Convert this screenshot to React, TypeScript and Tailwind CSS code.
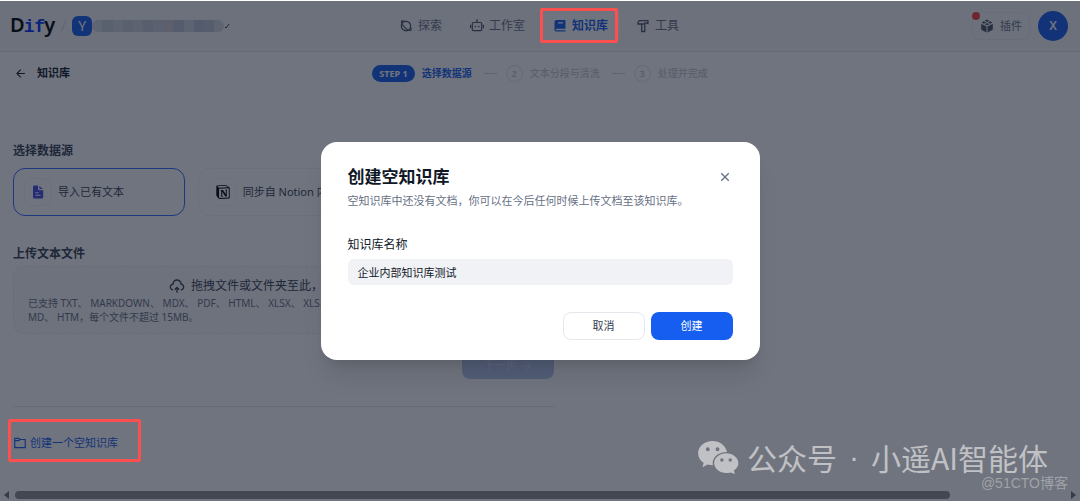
import {
  RiArrowLeftLine,
  RiArrowRightLine,
  RiCloseLine,
  RiFolder6Line,
  RiGlobalLine,
  RiPlanetLine,
  RiRobot2Line,
  RiUploadCloud2Line,
} from "react-icons/ri";
import { SiNotion } from "react-icons/si";

type IconProps = { className?: string };

function BookIcon({ className }: IconProps) {
  return (
    <svg viewBox="0 0 14 14" className={className} fill="currentColor">
      <path
        fillRule="evenodd"
        d="M3.500 1H12a.5.5 0 01.5.5v8.300H3.200a.8.8 0 000 1.400h9.300v1.300H3.300a1.800 1.800 0 01-1.800-1.800V3a2 2 0 012-2zM5 3.300v1.200h5V3.300z"
      />
    </svg>
  );
}

function HammerIcon({ className }: IconProps) {
  return (
    <svg viewBox="0 0 14 14" className={className} fill="none" stroke="currentColor" strokeWidth="1.300" strokeLinejoin="round">
      <path d="M3.500 1.700H12v3L10 3.900H8.800v8.600H5.700V5H1.800c0-1.800.6-2.800 1.700-3.300z" />
      <path d="M5.700 5h3.100" />
    </svg>
  );
}

function FileIcon({ className }: IconProps) {
  return (
    <svg viewBox="0 0 14 14" className={className} fill="currentColor">
      <path
        fillRule="evenodd"
        d="M3.500.5H7v3.300c0 .9.6 1.500 1.500 1.500h3.700V12c0 .9-.7 1.500-1.500 1.500H3.500C2.600 13.500 2 12.900 2 12V2C2 1.100 2.600.5 3.500.5zM4.400 7.200v1h3.200v-1zm0 2.500v1h5.200v-1z"
      />
      <path d="M8.300.9L11.800 4H9.100c-.5 0-.8-.3-.8-.8z" />
    </svg>
  );
}

function PluginIcon({ className }: IconProps) {
  return (
    <svg viewBox="0 0 14 14" className={className} fill="currentColor">
      <path d="M1.200 4.700l5.300 2.700v6L1.800 11a1 1 0 01-.6-.9zM12.800 4.700L7.500 7.400v6l4.700-2.400a1 1 0 00.6-.9z" />
      <path d="M3.900 2.200L6.100 3.400 3.900 4.700 1.700 3.500zM10.100 2.200l2.200 1.300-2.200 1.200-2.200-1.300zM7 .6l2.200 1.100L7 2.900 4.800 1.700zM7 4l2.200 1.200L7 6.300 4.800 5.200z" />
    </svg>
  );
}

const navItems = [
  { name: "探索", icon: RiPlanetLine },
  { name: "工作室", icon: RiRobot2Line },
  { name: "知识库", icon: BookIcon, active: true },
  { name: "工具", icon: HammerIcon },
];

const steps = ["文本分段与清洗", "处理并完成"];

const sources = [
  { name: "导入已有文本", icon: FileIcon, color: "text-[#444ce7]", active: true },
  { name: "同步自 Notion 内容", icon: SiNotion, color: "text-black" },
  { name: "同步自 Web 站点", icon: RiGlobalLine, color: "text-[#155eef]" },
];

const workspaceTiles = [
  "bg-[#d5dae4]", "bg-[#c6cdd8]", "bg-[#d3d6df]", "bg-[#c9ced9]", "bg-[#d0d5de]",
  "bg-[#c3c9d8]", "bg-[#ccd0da]", "bg-[#d3cad4]", "bg-[#b9c3d4]", "bg-[#d0d5de]",
  "bg-[#b7c1d1]", "bg-[#bfc7d4]", "bg-[#d3d8e0]",
];

function Logo() {
  return (
    <a href="#home" className="flex items-baseline text-xl leading-6 font-semibold text-black">
      D
      <span className="-mx-px font-['Liberation_Mono',monospace] text-lg leading-6 font-bold text-[#0033ff]">
        if
      </span>
      y
    </a>
  );
}

function Header() {
  return (
    <header className="flex h-[52px] items-center border-t border-b border-t-white border-b-[#e4e7ec] bg-[#f6f7f9] pr-3 pl-[10px]">
      <div className="flex flex-1 items-center">
        <Logo />
        <span className="mx-2 h-3 w-px rotate-[25deg] bg-[#d0d5dd]" />
        <div className="flex size-5 items-center justify-center rounded-md bg-[#155eef] text-sm text-white">
          Y
        </div>
        <div className="flex h-3 w-[132px] overflow-hidden rounded-md">
          {workspaceTiles.map((tile, i) => (
            <span key={i} className={`flex-1 ${tile}`} />
          ))}
        </div>
        <svg viewBox="0 0 6 6" className="size-[6px] text-[#344054]">
          <path d="M1 4l1 1 3-4" fill="none" stroke="currentColor" />
        </svg>
      </div>

      <nav className="flex items-center gap-1">
        {navItems.map(({ name, icon: Icon, active }) => (
          <a
            key={name}
            href="#nav"
            className={`flex h-7 items-center gap-[5px] rounded-lg px-3 text-xs ${
              active ? "bg-white font-bold text-[#155eef]" : "text-[#676f83]"
            }`}
          >
            <Icon className={active ? "size-[14px]" : "size-[14px] text-[#495464]"} />
            {name}
          </a>
        ))}
      </nav>

      <div className="flex flex-1 items-center justify-end gap-2">
        <button className="relative flex h-7 items-center gap-[6px] rounded-lg border border-[#eceef2] px-[7px] text-[11px] text-[#676f83]">
          <PluginIcon className="size-[14px] text-[#495464]" />
          插件
          <span className="absolute -top-px -left-px size-2 rounded-sm bg-[#f04438]" />
        </button>
        <button className="flex size-[30px] items-center justify-center rounded-full bg-[#155eef] text-xs font-semibold text-white">
          X
        </button>
      </div>
    </header>
  );
}

function StepBar() {
  return (
    <div className="flex h-11 items-center border-b border-[#f9fafb] px-[14px]">
      <a href="#datasets" className="flex flex-1 items-center gap-[10px] text-[11px] font-bold text-[#101828]">
        <RiArrowLeftLine className="size-[13px]" />
        知识库
      </a>
      <ol className="flex items-center gap-3 text-[10px]">
        <li className="flex items-center gap-[7px] font-bold text-[#155eef]">
          <span className="flex h-[17px] items-center rounded-full bg-[#155eef] px-[7px] text-[9px] text-white">
            STEP 1
          </span>
          选择数据源
        </li>
        {steps.map((step, i) => (
          <li key={step} className="flex items-center gap-[7px] text-[#c0c4ce]">
            <span className="mr-[2px] h-px w-[13px] bg-[#d0d5dd]" />
            <span className="flex size-[17px] items-center justify-center rounded-full border border-[#e0e3ea] text-[9px] font-semibold">
              {i + 2}
            </span>
            {step}
          </li>
        ))}
      </ol>
      <div className="flex-1" />
    </div>
  );
}

function SourceForm() {
  return (
    <main className="flex max-w-[567px] flex-col px-[13px] pt-[45px]">
      <h2 className="text-xs leading-5 font-bold text-[#354052]">选择数据源</h2>
      <div className="mt-[7px] grid grid-cols-3 gap-[13px]">
        {sources.map(({ name, icon: Icon, color, active }) => (
          <button
            key={name}
            className={`flex h-12 items-center gap-[6px] rounded-xl border px-[10px] text-[11px] text-[#354052] ${
              active ? "border-[#296dff]" : "border-[#f2f4f7]"
            }`}
          >
            <span className="flex size-7 shrink-0 items-center justify-center rounded-lg border border-[#f2f4f7]">
              <Icon className={`size-[14px] ${color}`} />
            </span>
            {name}
          </button>
        ))}
      </div>

      <h2 className="mt-7 text-xs leading-5 font-bold text-[#354052]">上传文本文件</h2>
      <div className="mt-[2px] flex h-[68px] flex-col justify-center rounded-xl border border-dashed border-[#e9ebf0] bg-[#f9fafb] px-[14px]">
        <p className="flex items-center justify-center gap-[6px] text-xs leading-5 text-[#354052]">
          <RiUploadCloud2Line className="size-4" />
          <span>
            拖拽文件或文件夹至此，或者 <a href="#browse" className="text-[#155eef]">选择文件</a>
          </span>
        </p>
        <p className="text-[10px] leading-[14px] text-[#676f83]">
          已支持 TXT、 MARKDOWN、 MDX、 PDF、 HTML、 XLSX、 XLS、 VTT、 PROPERTIES、 DOCX、 CSV、
          <br />
          MD、 HTM，每个文件不超过 15MB。
        </p>
      </div>

      <button className="mt-[18px] flex h-[27px] w-[92px] items-center justify-center gap-1 self-end rounded-lg bg-[#b5c6ee] text-[11px] text-white/40">
        下一步
        <RiArrowRightLine className="size-3" />
      </button>
      <hr className="mt-[27px] border-[#e4e7ec]" />
      <a href="#create" className="mt-7 flex items-center gap-[3px] self-start text-[11px] leading-4 text-[#155eef]">
        <RiFolder6Line className="size-[14px]" />
        创建一个空知识库
      </a>
    </main>
  );
}

function Scrollbar() {
  return (
    <div className="mt-auto flex h-3 items-center gap-[6px] px-1">
      <svg viewBox="0 0 5 8" className="h-2 w-[5px] text-[#707070]">
        <path d="M5 0v8L0 4z" fill="currentColor" />
      </svg>
      <div className="flex-1">
        <div className="h-2 w-[89%] rounded-full bg-[#8f8f8f]" />
      </div>
      <svg viewBox="0 0 5 8" className="h-2 w-[5px] text-[#707070]">
        <path d="M0 0v8l5-4z" fill="currentColor" />
      </svg>
    </div>
  );
}

function CreateDialog() {
  return (
    <div
      role="dialog"
      aria-labelledby="dialog-title"
      className="w-[439px] max-w-full rounded-2xl bg-white px-[27px] pt-[25px] pb-5 shadow-xl"
    >
      <div className="flex items-center justify-between">
        <h1 id="dialog-title" className="text-[17px] leading-5 font-bold text-[#101828]">
          创建空知识库
        </h1>
        <button aria-label="关闭" className="text-[#667085]">
          <RiCloseLine className="size-4" />
        </button>
      </div>
      <p className="mt-1 text-[11px] leading-5 text-[#667085]">
        空知识库中还没有文档，你可以在今后任何时候上传文档至该知识库。
      </p>
      <label htmlFor="dataset-name" className="mt-6 block text-xs leading-5 text-[#101828]">
        知识库名称
      </label>
      <input
        id="dataset-name"
        defaultValue="企业内部知识库测试"
        className="mt-1 block h-[26px] w-full rounded-md bg-[#f0f2f5] px-[10px] text-[11px] text-[#101828] outline-none"
      />
      <div className="mt-[27px] flex justify-end gap-[6px]">
        <button className="h-7 w-[82px] rounded-lg border border-[#e4e7ec] text-[11px] text-[#354052]">
          取消
        </button>
        <button className="h-7 w-[82px] rounded-lg bg-[#155eef] text-[11px] text-white">创建</button>
      </div>
    </div>
  );
}

function WechatIcon() {
  return (
    <svg viewBox="0 0 42 34" className="h-[33px] w-[41px]" fill="currentColor">
      <path
        fillRule="evenodd"
        d="M15 0C6.700 0 0 5.600 0 12.600c0 4 2.200 7.500 5.700 9.800L4.500 27l5.200-2.800c1.900.6 3.800.8 5.600.8-.2-.7-.3-1.400-.3-2.100 0-6.400 6.200-11.600 13.900-11.600h.9C28.300 4.800 22.300 0 15 0zM10 6.500a2 2 0 110 4 2 2 0 010-4zm10 0a2 2 0 110 4 2 2 0 010-4z"
      />
      <path
        fillRule="evenodd"
        d="M29 12.500c-6.900 0-12.500 4.600-12.500 10.200S22.100 33 29 33c1.500 0 3-.2 4.300-.6L38 34l-1.200-3.500c2.900-1.900 4.700-4.700 4.700-7.800 0-5.600-5.600-10.200-12.500-10.200zm-4.500 5.200a1.800 1.800 0 110 3.600 1.800 1.800 0 010-3.600zm8.600 0a1.800 1.800 0 110 3.600 1.800 1.800 0 010-3.600z"
      />
    </svg>
  );
}

export default function App() {
  return (
    <div className="relative flex min-h-screen flex-col overflow-hidden bg-white font-['Noto_Sans','Noto_Sans_CJK_SC',sans-serif]">
      <Header />
      <StepBar />
      <SourceForm />
      <Scrollbar />

      {/* Modal */}
      <div className="absolute inset-x-0 top-px bottom-0 flex items-center justify-center bg-[#101828]/60">
        <CreateDialog />
      </div>

      {/* Highlight boxes */}
      <div className="pointer-events-none absolute top-2 left-1/2 h-[35px] w-[78px] rounded-xs border-[3px] border-[#fc4f50]" />
      <div className="pointer-events-none absolute top-[419px] left-2 h-[43px] w-[133px] rounded-xs border-[3px] border-[#fc4f50]" />

      {/* Watermarks */}
      <div className="pointer-events-none absolute right-8 bottom-[22px] flex items-center gap-2 text-[#c0c1c5]">
        <WechatIcon />
        <div className="flex gap-3 font-['Noto_Sans_CJK_SC',sans-serif] text-[30px] leading-[44px]">
          <span>公众号</span>
          <span className="font-['Liberation_Sans',sans-serif]">·</span>
          <span>小遥AI智能体</span>
        </div>
      </div>
      <div className="pointer-events-none absolute right-3 bottom-2 font-['Liberation_Sans','Noto_Sans_CJK_SC',sans-serif] text-sm leading-5 text-[#a0a3a9]">
        @51CTO博客
      </div>
    </div>
  );
}
